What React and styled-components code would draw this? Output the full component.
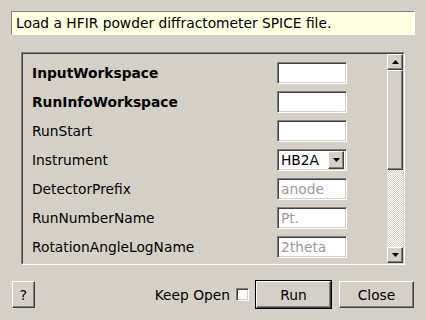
import React from 'react';
import styled, { createGlobalStyle, css } from 'styled-components';

const $face = '#d4d0c8';
const $shadow = '#808080';
const $dark = '#404040';
const $light = '#fff';
const $fontSize = '13.8px';

const GlobalStyle = createGlobalStyle`
  body {
    margin: 0;
    background: ${$face};
    font-family: "DejaVu Sans", "Liberation Sans", sans-serif;
    font-size: ${$fontSize};
    color: #000;
  }
`;

const raised = css`
  border: 1px solid;
  border-color: ${$light} ${$dark} ${$dark} ${$light};
  box-shadow: inset -1px -1px ${$shadow};
  background: ${$face};
`;

const sunken = css`
  border: 1px solid;
  border-color: ${$shadow} ${$light} ${$light} ${$shadow};
  box-shadow: inset 1px 1px ${$dark}, inset -1px -1px ${$face};
`;

const Window = styled.div`
  box-sizing: border-box;
  width: 426px;
  height: 320px;
  padding: 11px 11px 0 11px;
  display: flex;
  flex-direction: column;
  background: ${$face};
`;

const Description = styled.div`
  box-sizing: border-box;
  width: 404px;
  height: 24px;
  border: 1px solid;
  border-color: ${$shadow} ${$light} ${$light} ${$shadow};
  background: #ffffe1;
  padding-left: 4px;
  line-height: 22px;
  white-space: nowrap;
`;

const Panel = styled.div`
  box-sizing: border-box;
  width: 384px;
  height: 213px;
  margin: 17px 0 0 10px;
  border: 1px solid;
  border-color: ${$shadow} ${$light} ${$light} ${$shadow};
  display: flex;
`;

const PanelInner = styled.div`
  flex: 1;
  display: flex;
  border: 1px solid;
  border-color: ${$dark} ${$face} ${$face} ${$dark};
  overflow: hidden;
`;

const Form = styled.div`
  flex: 1;
  display: flex;
  flex-direction: column;
  gap: 7px;
  padding: 8px 0 0 9px;
`;

const Row = styled.div`
  display: flex;
  align-items: center;
  height: 22px;
`;

const Label = styled.span`
  width: 245px;
  font-weight: ${(p) => (p.$mandatory ? 'bold' : 'normal')};
  white-space: nowrap;
`;

const Field = styled.input`
  box-sizing: border-box;
  width: 70px;
  height: 22px;
  margin: 0;
  padding: 0 3px;
  ${sunken};
  background: #fff;
  font-family: inherit;
  font-size: ${$fontSize};
  outline: none;
  &::placeholder {
    color: #9a9a9a;
    opacity: 1;
  }
`;

const Combo = styled.div`
  box-sizing: border-box;
  width: 70px;
  height: 22px;
  ${sunken};
  background: #fff;
  display: flex;
  align-items: center;
  justify-content: space-between;
  padding: 2px 2px 2px 3px;
`;

const ComboButton = styled.span`
  box-sizing: border-box;
  width: 16px;
  height: 18px;
  ${raised};
  display: flex;
  align-items: center;
  justify-content: center;
`;

const ScrollBar = styled.div`
  width: 16px;
  display: flex;
  flex-direction: column;
`;

const ArrowButton = styled.div`
  box-sizing: border-box;
  height: 16px;
  ${raised};
  display: flex;
  align-items: center;
  justify-content: center;
`;

const Handle = styled.div`
  box-sizing: border-box;
  height: 100px;
  ${raised};
`;

const Trough = styled.div`
  flex: 1;
  background: repeating-conic-gradient(#fff 0 25%, ${$face} 0 50%) 0 0 / 2px 2px;
`;

const ButtonRow = styled.div`
  display: flex;
  align-items: center;
  height: 29px;
  margin-top: 15px;
`;

const Button = styled.button`
  box-sizing: border-box;
  width: ${(p) => p.$width || 75}px;
  height: 27px;
  margin: 0;
  padding: 0;
  ${raised};
  font-family: inherit;
  font-size: ${$fontSize};
  color: #000;
`;

const DefaultFrame = styled.div`
  border: 1px solid #000;
  margin-left: 6px;
  display: flex;
`;

const Spacer = styled.div`
  flex: 1;
`;

const CheckLabel = styled.span`
  white-space: nowrap;
`;

const CheckBox = styled.span`
  box-sizing: border-box;
  width: 13px;
  height: 13px;
  margin-left: 6px;
  ${sunken};
  background: #fff;
`;

const Arrow = ({ down }) => (
  <svg width="7" height="4" viewBox="0 0 7 4">
    <polygon points={down ? '0,0 7,0 3.5,4' : '0,4 7,4 3.5,0'} fill="#000" />
  </svg>
);

const properties = [
  { name: 'InputWorkspace', mandatory: true },
  { name: 'RunInfoWorkspace', mandatory: true },
  { name: 'RunStart' },
  { name: 'Instrument', combo: 'HB2A' },
  { name: 'DetectorPrefix', placeholder: 'anode' },
  { name: 'RunNumberName', placeholder: 'Pt.' },
  { name: 'RotationAngleLogName', placeholder: '2theta' },
];

const App = () => {
  return (
    <>
      <GlobalStyle />
      <Window>
        <Description>Load a HFIR powder diffractometer SPICE file.</Description>
        <Panel>
          <PanelInner>
            <Form>
              {properties.map((p) => (
                <Row key={p.name}>
                  <Label $mandatory={p.mandatory}>{p.name}</Label>
                  {p.combo ? (
                    <Combo>
                      <span>{p.combo}</span>
                      <ComboButton>
                        <Arrow down />
                      </ComboButton>
                    </Combo>
                  ) : (
                    <Field placeholder={p.placeholder || ''} readOnly />
                  )}
                </Row>
              ))}
            </Form>
            <ScrollBar>
              <ArrowButton>
                <Arrow />
              </ArrowButton>
              <Handle />
              <Trough />
              <ArrowButton>
                <Arrow down />
              </ArrowButton>
            </ScrollBar>
          </PanelInner>
        </Panel>
        <ButtonRow>
          <Button $width={23} style={{ marginLeft: 1 }}>?</Button>
          <Spacer />
          <CheckLabel>Keep Open</CheckLabel>
          <CheckBox />
          <DefaultFrame>
            <Button>Run</Button>
          </DefaultFrame>
          <Button style={{ marginLeft: 7, marginRight: 1 }}>Close</Button>
        </ButtonRow>
      </Window>
    </>
  );
};

export default App;
